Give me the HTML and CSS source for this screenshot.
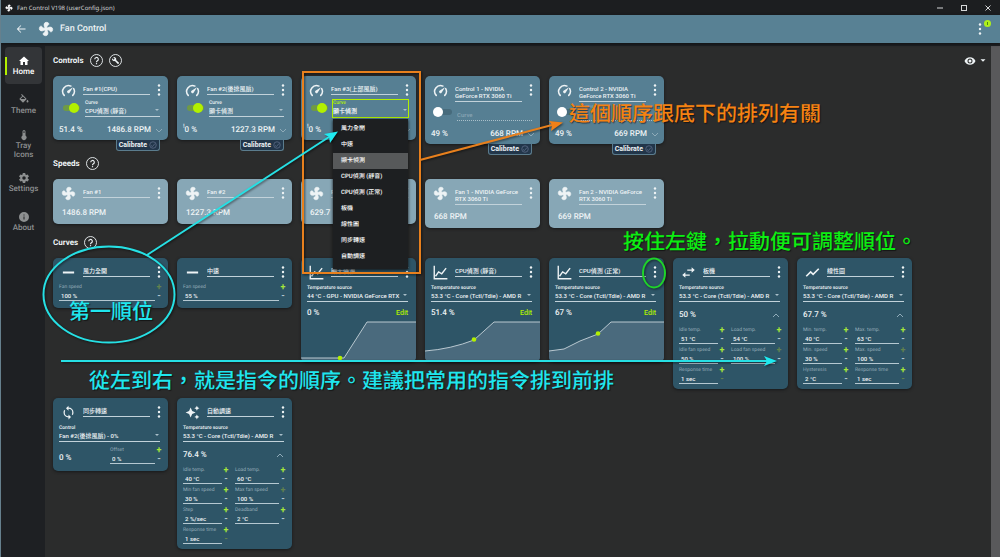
FILE: index.html
```html
<!DOCTYPE html>
<html lang="zh-TW">
<head>
<meta charset="utf-8">
<title>Fan Control</title>
<link rel="stylesheet" href="styles.css">
</head>
<body>
<svg class="defs" aria-hidden="true">
  <symbol id="fan" viewBox="0 0 24 24"><path stroke="currentColor" stroke-width="1" d="M12.5,2C17,2 17.11,5.57 14.75,6.75C13.76,7.24 13.32,8.29 13.13,9.22C13.61,9.42 14.03,9.73 14.35,10.13C18.05,8.13 22.03,8.92 22.03,12.5C22.03,17 18.46,17.1 17.28,14.73C16.78,13.74 15.72,13.3 14.79,13.11C14.59,13.59 14.28,14 13.88,14.34C15.87,18.03 15.08,22 11.5,22C7,22 6.91,18.42 9.27,17.24C10.25,16.75 10.69,15.71 10.89,14.79C10.4,14.59 9.97,14.27 9.65,13.87C5.96,15.85 2,15.07 2,11.5C2,7 5.56,6.89 6.74,9.26C7.24,10.25 8.29,10.68 9.22,10.87C9.41,10.39 9.73,9.97 10.14,9.65C8.15,5.96 8.94,2 12.5,2Z"/></symbol>
  <symbol id="gauge" viewBox="0 0 24 24"><path d="M5.2,19.8A9.4,9.4 0 0 1 16,4.9M20.3,8.9A9.4,9.4 0 0 1 18.8,19.8" fill="none" stroke="currentColor" stroke-width="2.4" stroke-linecap="round"/><path d="M10.4,15.6a2.3,2.3 0 0 0 3.3,0l5.6,-8.8l-8.9,5.5a2.3,2.3 0 0 0 0,3.3z"/></symbol>
  <symbol id="dots" viewBox="0 0 4 14"><circle cx="2" cy="2.5" r="1.2"/><circle cx="2" cy="7" r="1.2"/><circle cx="2" cy="11.5" r="1.2"/></symbol>
  <symbol id="caret" viewBox="0 0 6 4"><path d="M1,1H5L3,3Z"/></symbol>
  <symbol id="down" viewBox="0 0 8 5"><path d="M1,1L4,4L7,1" fill="none" stroke="currentColor"/></symbol>
  <symbol id="up" viewBox="0 0 8 5"><path d="M1,4L4,1L7,4" fill="none" stroke="currentColor"/></symbol>
  <symbol id="line" viewBox="0 0 24 24"><path d="M3,12H21" stroke="currentColor" stroke-width="3"/></symbol>
  <symbol id="chart" viewBox="0 0 24 24"><path d="M2,1V22H23M4,18L9,11L14,14L21,5" fill="none" stroke="currentColor" stroke-width="2.2"/></symbol>
  <symbol id="swap" viewBox="0 0 24 24"><path d="M22,8L17,3.5V7H10V9H17V12.500ZM2,16L7,11.500V15H14V17H7V20.500Z"/></symbol>
  <symbol id="trend" viewBox="0 0 24 24"><path d="M2,18L9,11L13,15L22,6" fill="none" stroke="currentColor" stroke-width="2.6"/></symbol>
  <symbol id="sync" viewBox="0 0 24 24"><path d="M12,18A6,6 0 0,1 6,12C6,11 6.25,10.03 6.7,9.2L5.24,7.74C4.46,8.97 4,10.43 4,12A8,8 0 0,0 12,20V23L16,19L12,15M12,4V1L8,5L12,9V6A6,6 0 0,1 18,12C18,13 17.75,13.97 17.3,14.8L18.76,16.26C19.54,15.03 20,13.57 20,12A8,8 0 0,0 12,4Z"/></symbol>
  <symbol id="auto" viewBox="0 0 24 24"><path d="M19 9l1.25-2.75L23 5l-2.75-1.25L19 1l-1.25 2.75L15 5l2.75 1.25L19 9zM11.500 9.500L9 4 6.500 9.500 1 12l5.500 2.500L9 20l2.500-5.500L17 12zM19 15l-1.250 2.750L15 19l2.750 1.250L19 23l1.250-2.750L23 19l-2.750-1.250z"/></symbol>
  <symbol id="help" viewBox="0 0 26 26"><circle cx="13" cy="13" r="12" fill="none" stroke="currentColor" stroke-width="1.8"/><path d="M9.500,10.500a3.600,3.600 0 1 1 5.400,3.100q-1.900,1.100 -1.900,3" fill="none" stroke="currentColor" stroke-width="2.200"/><circle cx="13" cy="19.300" r="1.400"/></symbol>
  <symbol id="wrench" viewBox="0 0 26 26"><circle cx="13" cy="13" r="12" fill="none" stroke="currentColor" stroke-width="1.8"/><path transform="translate(5.500 5.500) scale(.64)" d="M22.7,19L13.6,9.9C14.5,7.6 14,4.9 12.1,3C10.1,1 7.1,0.6 4.7,1.7L9,6L6,9L1.6,4.7C0.4,7.1 0.9,10.1 2.9,12.1C4.8,14 7.5,14.5 9.8,13.6L18.9,22.7C19.3,23.1 19.9,23.1 20.3,22.7L22.6,20.4C23.1,20 23.1,19.3 22.7,19Z"/></symbol>
  <symbol id="cal" viewBox="0 0 16 16"><circle cx="8" cy="8" r="6.500" fill="none" stroke="currentColor" stroke-width="1.600"/><path d="M4,9L7,11L12,5" fill="none" stroke="currentColor" stroke-width="1.600"/></symbol>
</svg>

<div class="titlebar">
  <svg class="i8"><use href="#fan"/></svg>
  <span class="grow">Fan Control V198 (userConfig.json)</span>
  <button aria-label="Minimize"><svg viewBox="0 0 8 8"><path d="M1,4H7" stroke="currentColor"/></svg></button>
  <button aria-label="Maximize"><svg viewBox="0 0 8 8"><rect x="1.500" y="1.500" width="5" height="5" fill="none" stroke="currentColor"/></svg></button>
  <button aria-label="Close"><svg viewBox="0 0 8 8"><path d="M1.500,1.500L6.500,6.500M6.500,1.500L1.500,6.500" stroke="currentColor"/></svg></button>
</div>

<header class="appbar">
  <button aria-label="Back"><svg class="i12" viewBox="0 0 24 24"><path d="M21,11V13H7L12.500,18.500L11.300,19.700L3.600,12L11.300,4.300L12.500,5.500L7,11H21Z"/></svg></button>
  <svg class="i16"><use href="#fan"/></svg>
  <h1 class="grow">Fan Control</h1>
  <button class="more" aria-label="More"><svg class="dots"><use href="#dots"/></svg><span class="badge"></span></button>
</header>

<div class="shell">
  <nav class="side">
    <a class="on" href="#home"><svg class="i12" viewBox="0 0 24 24"><path d="M10,20V14H14V20H19V12H22L12,3L2,12H5V20H10Z"/></svg>Home</a>
    <a href="#theme"><svg class="i12" viewBox="0 0 24 24"><path d="M19,11.5C19,11.5 17,13.67 17,15A2,2 0 0,0 19,17A2,2 0 0,0 21,15C21,13.67 19,11.5 19,11.5M5.21,10L10,5.21L14.79,10M16.56,8.94L7.62,0L6.21,1.41L8.59,3.79L3.44,8.94C2.85,9.5 2.85,10.47 3.44,11.06L8.94,16.56C9.23,16.85 9.62,17 10,17C10.38,17 10.77,16.85 11.06,16.56L16.56,11.06C17.15,10.47 17.15,9.5 16.56,8.94Z"/></svg>Theme</a>
    <a href="#tray"><svg class="i12" viewBox="0 0 24 24"><path d="M15 13V5A3 3 0 0 0 9 5V13A5 5 0 1 0 15 13M12 4A1 1 0 0 1 13 5V8H11V5A1 1 0 0 1 12 4Z"/></svg>Tray<br>Icons</a>
    <a href="#settings"><svg class="i12" viewBox="0 0 24 24"><path d="M12,15.5A3.5,3.5 0 0,1 8.5,12A3.5,3.5 0 0,1 12,8.5A3.5,3.5 0 0,1 15.5,12A3.5,3.5 0 0,1 12,15.5M19.43,12.97C19.47,12.65 19.5,12.33 19.5,12C19.5,11.67 19.47,11.34 19.43,11L21.54,9.37C21.73,9.22 21.78,8.95 21.66,8.73L19.66,5.27C19.54,5.05 19.27,4.96 19.05,5.05L16.56,6.05C16.04,5.66 15.5,5.32 14.87,5.07L14.5,2.42C14.46,2.18 14.25,2 14,2H10C9.75,2 9.54,2.18 9.5,2.42L9.13,5.07C8.5,5.32 7.96,5.66 7.44,6.05L4.95,5.05C4.73,4.96 4.46,5.05 4.34,5.27L2.34,8.73C2.21,8.95 2.27,9.22 2.46,9.37L4.57,11C4.53,11.34 4.5,11.67 4.5,12C4.5,12.33 4.53,12.65 4.57,12.97L2.46,14.63C2.27,14.78 2.21,15.05 2.34,15.27L4.34,18.73C4.46,18.95 4.73,19.03 4.95,18.95L7.44,17.94C7.96,18.34 8.5,18.68 9.13,18.93L9.5,21.58C9.54,21.82 9.75,22 10,22H14C14.25,22 14.46,21.82 14.5,21.58L14.87,18.93C15.5,18.67 16.04,18.34 16.56,17.94L19.05,18.95C19.27,19.03 19.54,18.95 19.66,18.73L21.66,15.27C21.78,15.05 21.73,14.78 21.54,14.63L19.43,12.97Z"/></svg>Settings</a>
    <a href="#about"><svg class="i12" viewBox="0 0 24 24"><path d="M13,9H11V7H13M13,17H11V11H13M12,2A10,10 0 0,0 2,12A10,10 0 0,0 12,22A10,10 0 0,0 22,12A10,10 0 0,0 12,2Z"/></svg>About</a>
  </nav>

  <main class="main">
    <section>
      <div class="heading"><h2>Controls</h2>
        <button aria-label="Help"><svg class="i13"><use href="#help"/></svg></button>
        <button aria-label="Setup"><svg class="i13"><use href="#wrench"/></svg></button>
        <button class="view" aria-label="Visibility"><svg class="i12" viewBox="0 0 24 24"><path d="M12,9A3,3 0 0,0 9,12A3,3 0 0,0 12,15A3,3 0 0,0 15,12A3,3 0 0,0 12,9M12,17A5,5 0 0,1 7,12A5,5 0 0,1 12,7A5,5 0 0,1 17,12A5,5 0 0,1 12,17M12,4.5C7,4.5 2.73,7.61 1,12C2.73,16.39 7,19.5 12,19.5C17,19.5 21.27,16.39 23,12C21.27,7.61 17,4.5 12,4.5Z"/></svg><svg class="caret"><use href="#caret"/></svg></button>
      </div>
      <div class="cards">
        <div class="slot">
          <article class="card control">
            <div class="head"><svg class="i14"><use href="#gauge"/></svg><input class="name" aria-label="Name" value="Fan #1(CPU)"><button aria-label="Menu"><svg class="dots"><use href="#dots"/></svg></button></div>
            <div class="drive"><input class="switch" type="checkbox" aria-label="Enabled" checked><label class="pick">Curve<select><option>CPU偵測 (靜音)</option></select><svg class="caret"><use href="#caret"/></svg></label></div>
            <div class="foot"><span>51.4 %</span><span>1486.8 RPM</span><svg class="chev"><use href="#down"/></svg></div>
          </article>
          <button class="calibrate">Calibrate<svg class="i8"><use href="#cal"/></svg></button>
        </div>
        <div class="slot">
          <article class="card control">
            <div class="head"><svg class="i14"><use href="#gauge"/></svg><input class="name" aria-label="Name" value="Fan #2(後排風扇)"><button aria-label="Menu"><svg class="dots"><use href="#dots"/></svg></button></div>
            <div class="drive"><input class="switch" type="checkbox" aria-label="Enabled" checked><label class="pick">Curve<select><option>顯卡偵測</option></select><svg class="caret"><use href="#caret"/></svg></label></div>
            <div class="foot"><span><sup>!</sup>0 %</span><span>1227.3 RPM</span><svg class="chev"><use href="#down"/></svg></div>
          </article>
          <button class="calibrate">Calibrate<svg class="i8"><use href="#cal"/></svg></button>
        </div>
        <div class="slot">
          <article class="card control">
            <div class="head"><svg class="i14"><use href="#gauge"/></svg><input class="name" aria-label="Name" value="Fan #3(上部風扇)"><button aria-label="Menu"><svg class="dots"><use href="#dots"/></svg></button></div>
            <div class="drive"><input class="switch" type="checkbox" aria-label="Enabled" checked>
              <div class="open">
                <label class="pick">Curve<select><option>顯卡偵測</option></select><svg class="caret"><use href="#caret"/></svg></label>
                <ul class="menu" role="listbox" aria-label="Curve">
                  <li role="option">風力全開</li><li role="option">中速</li><li role="option" aria-selected="true">顯卡偵測</li><li role="option">CPU偵測 (靜音)</li><li role="option">CPU偵測 (正常)</li><li role="option">板機</li><li role="option">線性圖</li><li role="option">同步轉速</li><li role="option">自動調速</li>
                </ul>
              </div>
            </div>
            <div class="foot"><span><sup>!</sup>0 %</span><svg class="chev"><use href="#down"/></svg></div>
          </article>
        </div>
        <div class="slot">
          <article class="card control">
            <div class="head"><svg class="i14"><use href="#gauge"/></svg><textarea class="name" aria-label="Name" rows="2">Control 1 - NVIDIA
GeForce RTX 3060 Ti</textarea><button aria-label="Menu"><svg class="dots"><use href="#dots"/></svg></button></div>
            <div class="drive"><input class="switch" type="checkbox" aria-label="Enabled"><div class="pick empty"><select aria-label="Curve"><option>Curve</option></select></div></div>
            <div class="foot"><span>49 %</span><span>668 RPM</span><svg class="chev"><use href="#down"/></svg></div>
          </article>
          <button class="calibrate">Calibrate<svg class="i8"><use href="#cal"/></svg></button>
        </div>
        <div class="slot">
          <article class="card control">
            <div class="head"><svg class="i14"><use href="#gauge"/></svg><textarea class="name" aria-label="Name" rows="2">Control 2 - NVIDIA
GeForce RTX 3060 Ti</textarea><button aria-label="Menu"><svg class="dots"><use href="#dots"/></svg></button></div>
            <div class="drive"><input class="switch" type="checkbox" aria-label="Enabled"><label class="pick empty">Curve<select><option></option></select></label></div>
            <div class="foot"><span>49 %</span><span>669 RPM</span><svg class="chev"><use href="#down"/></svg></div>
          </article>
          <button class="calibrate">Calibrate<svg class="i8"><use href="#cal"/></svg></button>
        </div>
      </div>
    </section>

    <section>
      <div class="heading"><h2>Speeds</h2><button aria-label="Help"><svg class="i13"><use href="#help"/></svg></button></div>
      <div class="cards">
        <article class="card speed"><div class="head"><svg class="i14"><use href="#fan"/></svg><input class="name" aria-label="Name" value="Fan #1"><button aria-label="Menu"><svg class="dots"><use href="#dots"/></svg></button></div><p>1486.8 RPM</p></article>
        <article class="card speed"><div class="head"><svg class="i14"><use href="#fan"/></svg><input class="name" aria-label="Name" value="Fan #2"><button aria-label="Menu"><svg class="dots"><use href="#dots"/></svg></button></div><p>1227.3 RPM</p></article>
        <article class="card speed"><div class="head"><svg class="i14"><use href="#fan"/></svg><input class="name" aria-label="Name" value="Fan #3"><button aria-label="Menu"><svg class="dots"><use href="#dots"/></svg></button></div><p>629.7</p></article>
        <article class="card speed"><div class="head"><svg class="i14"><use href="#fan"/></svg><textarea class="name" aria-label="Name" rows="2">Fan 1 - NVIDIA GeForce
RTX 3060 Ti</textarea><button aria-label="Menu"><svg class="dots"><use href="#dots"/></svg></button></div><p>668 RPM</p></article>
        <article class="card speed"><div class="head"><svg class="i14"><use href="#fan"/></svg><textarea class="name" aria-label="Name" rows="2">Fan 2 - NVIDIA GeForce
RTX 3060 Ti</textarea><button aria-label="Menu"><svg class="dots"><use href="#dots"/></svg></button></div><p>669 RPM</p></article>
      </div>
    </section>

    <section>
      <div class="heading"><h2>Curves</h2><button aria-label="Help"><svg class="i13"><use href="#help"/></svg></button></div>
      <div class="cards">
        <article class="card curve">
          <div class="head"><svg class="i14"><use href="#line"/></svg><input class="name" aria-label="Name" value="風力全開"><button aria-label="Menu"><svg class="dots"><use href="#dots"/></svg></button></div>
          <div class="num"><label for="n1">Fan speed</label><button class="off">+</button><input id="n1" value="100 %"><button>-</button></div>
        </article>
        <article class="card curve">
          <div class="head"><svg class="i14"><use href="#line"/></svg><input class="name" aria-label="Name" value="中速"><button aria-label="Menu"><svg class="dots"><use href="#dots"/></svg></button></div>
          <div class="num"><label for="n2">Fan speed</label><button>+</button><input id="n2" value="55 %"><button>-</button></div>
        </article>
        <article class="card curve">
          <div class="head"><svg class="i14"><use href="#chart"/></svg><input class="name" aria-label="Name" value="顯卡偵測"><button aria-label="Menu"><svg class="dots"><use href="#dots"/></svg></button></div>
          <label class="pick">Temperature source<select><option>44 °C - GPU - NVIDIA GeForce RTX 3060 Ti</option></select><svg class="caret"><use href="#caret"/></svg></label>
          <div class="state"><span>0 %</span><button class="edit">Edit</button></div>
          <svg class="plot" viewBox="0 0 115 41" preserveAspectRatio="none"><path class="area" d="M0,37H43L66,1H115V41H0Z"/><path class="stroke" d="M0,37H43L66,1H115"/><circle cx="39" cy="37" r="2.300"/></svg>
        </article>
        <article class="card curve">
          <div class="head"><svg class="i14"><use href="#chart"/></svg><input class="name" aria-label="Name" value="CPU偵測 (靜音)"><button aria-label="Menu"><svg class="dots"><use href="#dots"/></svg></button></div>
          <label class="pick">Temperature source<select><option>53.3 °C - Core (Tctl/Tdie) - AMD R</option></select><svg class="caret"><use href="#caret"/></svg></label>
          <div class="state"><span>51.4 %</span><button class="edit">Edit</button></div>
          <svg class="plot" viewBox="0 0 115 41" preserveAspectRatio="none"><path class="area" d="M0,30Q26,28 49,19L69,1H115V41H0Z"/><path class="stroke" d="M0,30Q26,28 49,19L69,1H115"/><circle cx="49" cy="18.500" r="2.300"/></svg>
        </article>
        <article class="card curve">
          <div class="head"><svg class="i14"><use href="#chart"/></svg><input class="name" aria-label="Name" value="CPU偵測 (正常)"><button aria-label="Menu"><svg class="dots"><use href="#dots"/></svg></button></div>
          <label class="pick">Temperature source<select><option>53.3 °C - Core (Tctl/Tdie) - AMD R</option></select><svg class="caret"><use href="#caret"/></svg></label>
          <div class="state"><span>67 %</span><button class="edit">Edit</button></div>
          <svg class="plot" viewBox="0 0 115 41" preserveAspectRatio="none"><path class="area" d="M0,30L15,28L31,20L49,13L62,1H115V41H0Z"/><path class="stroke" d="M0,30L15,28L31,20L49,13L62,1H115"/><circle cx="49" cy="12.500" r="2.300"/></svg>
        </article>
        <article class="card curve">
          <div class="head"><svg class="i14"><use href="#swap"/></svg><input class="name" aria-label="Name" value="板機"><button aria-label="Menu"><svg class="dots"><use href="#dots"/></svg></button></div>
          <label class="pick">Temperature source<select><option>53.3 °C - Core (Tctl/Tdie) - AMD R</option></select><svg class="caret"><use href="#caret"/></svg></label>
          <div class="state tall"><span>50 %</span><svg class="chev"><use href="#up"/></svg></div>
          <div class="fields">
            <div class="num"><label for="a1">Idle temp.</label><button>+</button><input id="a1" value="51 °C"><button>-</button></div>
            <div class="num"><label for="a2">Load temp.</label><button>+</button><input id="a2" value="54 °C"><button>-</button></div>
            <div class="num"><label for="a3">Idle fan speed</label><button>+</button><input id="a3" value="50 %"><button>-</button></div>
            <div class="num"><label for="a4">Load fan speed</label><button class="off">+</button><input id="a4" value="100 %"><button>-</button></div>
            <div class="num"><label for="a5">Response time</label><button>+</button><input id="a5" value="1 sec"><button class="off">-</button></div>
          </div>
        </article>
        <article class="card curve">
          <div class="head"><svg class="i14"><use href="#trend"/></svg><input class="name" aria-label="Name" value="線性圖"><button aria-label="Menu"><svg class="dots"><use href="#dots"/></svg></button></div>
          <label class="pick">Temperature source<select><option>53.3 °C - Core (Tctl/Tdie) - AMD R</option></select><svg class="caret"><use href="#caret"/></svg></label>
          <div class="state tall"><span>67.7 %</span><svg class="chev"><use href="#up"/></svg></div>
          <div class="fields">
            <div class="num"><label for="b1">Min. temp.</label><button>+</button><input id="b1" value="40 °C"><button>-</button></div>
            <div class="num"><label for="b2">Max. temp.</label><button>+</button><input id="b2" value="63 °C"><button>-</button></div>
            <div class="num"><label for="b3">Min. speed</label><button>+</button><input id="b3" value="30 %"><button>-</button></div>
            <div class="num"><label for="b4">Max. speed</label><button class="off">+</button><input id="b4" value="100 %"><button>-</button></div>
            <div class="num"><label for="b5">Hysteresis</label><button>+</button><input id="b5" value="2 °C"><button>-</button></div>
            <div class="num"><label for="b6">Response time</label><button>+</button><input id="b6" value="1 sec"><button class="off">-</button></div>
          </div>
        </article>
        <article class="card curve">
          <div class="head"><svg class="i14"><use href="#sync"/></svg><input class="name" aria-label="Name" value="同步轉速"><button aria-label="Menu"><svg class="dots"><use href="#dots"/></svg></button></div>
          <label class="pick">Control<select><option>Fan #2(後排風扇) - 0%</option></select><svg class="caret"><use href="#caret"/></svg></label>
          <div class="offset"><span>0 %</span><div class="num"><label for="s1">Offset</label><button>+</button><input id="s1" value="0 %"><button>-</button></div></div>
        </article>
        <article class="card curve">
          <div class="head"><svg class="i14"><use href="#auto"/></svg><input class="name" aria-label="Name" value="自動調速"><button aria-label="Menu"><svg class="dots"><use href="#dots"/></svg></button></div>
          <label class="pick">Temperature source<select><option>53.3 °C - Core (Tctl/Tdie) - AMD R</option></select><svg class="caret"><use href="#caret"/></svg></label>
          <div class="state tall"><span>76.4 %</span><svg class="chev"><use href="#up"/></svg></div>
          <div class="fields">
            <div class="num"><label for="c1">Idle temp.</label><button>+</button><input id="c1" value="40 °C"><button>-</button></div>
            <div class="num"><label for="c2">Load temp.</label><button>+</button><input id="c2" value="60 °C"><button>-</button></div>
            <div class="num"><label for="c3">Min fan speed</label><button>+</button><input id="c3" value="30 %"><button>-</button></div>
            <div class="num"><label for="c4">Max fan speed</label><button class="off">+</button><input id="c4" value="100 %"><button>-</button></div>
            <div class="num"><label for="c5">Step</label><button>+</button><input id="c5" value="2 %/sec"><button>-</button></div>
            <div class="num"><label for="c6">Deadband</label><button>+</button><input id="c6" value="2 °C"><button>-</button></div>
            <div class="num"><label for="c7">Response time</label><button>+</button><input id="c7" value="1 sec"><button class="off">-</button></div>
          </div>
        </article>
      </div>
    </section>
  </main>
  <div class="scroll"></div>
</div>

<div class="notes">
  <svg viewBox="0 0 1000 557">
    <g class="orange"><rect x="303" y="72" width="117" height="201"/><path d="M420,160L552,125"/><path class="tip" d="M563,122.500L549,121L552,125L551,131Z"/></g>
    <g class="cyan"><ellipse cx="109" cy="294.500" rx="65.500" ry="48"/><path d="M147,255L329,137"/><path class="tip" d="M338,131.500L330,143L329,137L324,134Z"/><path d="M61,361H767"/><path class="tip" d="M777,361L764,356L767,361L764,366Z"/></g>
    <g class="green"><ellipse cx="654" cy="273" rx="11" ry="14.500"/></g>
  </svg>
  <p class="n1">這個順序跟底下的排列有關</p>
  <p class="n2">按住左鍵，拉動便可調整順位。</p>
  <p class="n3">第一順位</p>
  <p class="n4">從左到右，就是指令的順序。建議把常用的指令排到前排</p>
</div>
</body>
</html>
```

FILE: styles.css
```css
* { box-sizing: border-box; margin: 0; padding: 0; }
html { background: #2b2c2c; }
body {
  position: relative;
  min-height: 100vh;
  display: flex;
  flex-direction: column;
  border-left: 1px solid #66808d;
  color: #eef3f5;
  font: 500 6px/7px Roboto, "Noto Sans CJK TC", sans-serif;
  text-rendering: geometricPrecision;
  overflow: hidden;
}
button, input, select, textarea {
  font: inherit;
  color: inherit;
  background: none;
  border: 0;
  border-radius: 0;
  outline: 0;
  appearance: none;
}
button { display: flex; align-items: center; justify-content: center; cursor: pointer; }
svg { display: block; flex: none; fill: currentColor; }
.defs { position: absolute; width: 0; height: 0; }
.grow { flex: 1; }
.i8 { width: 8px; height: 8px; }
.i12 { width: 12px; height: 12px; }
.i13 { width: 13px; height: 13px; }
.i14 { width: 15px; height: 15px; }
.i16 { width: 16px; height: 16px; }
.dots { width: 4px; height: 14px; }
.caret { width: 6px; height: 4px; }
.chev { width: 8px; height: 5px; color: #8fabb9; }

.titlebar {
  display: flex;
  align-items: center;
  gap: 4px;
  height: 15px;
  padding: 0 2px 0 4px;
  background: #1c1e20;
  color: #d4d6d7;
  font: 6px/14px "Noto Sans", "Open Sans", sans-serif;
}
.titlebar button { width: 20px; height: 14px; }
.titlebar button svg { width: 8px; height: 8px; }
.titlebar .i8 { color: #fff; }

.appbar {
  display: flex;
  align-items: center;
  height: 28px;
  padding: 0 18px 0 14px;
  background: #588194;
  box-shadow: 0 1px 3px #101214;
  z-index: 1;
}
.appbar > .i16 { margin: 0 6px 0 11px; }
.appbar h1 { font-size: 9px; line-height: 14px; font-weight: 500; }
.more { position: relative; }
.badge { position: absolute; left: 6px; top: -2px; width: 7px; height: 7px; border-radius: 50%; background: #aef01a; }
.badge::after { content: ""; position: absolute; left: 3px; top: 2px; width: 1px; height: 3px; background: #4f8a12; }

.shell { flex: 1; display: flex; padding-top: 3px; background: #1e2023; }
.side {
  width: 44px;
  flex: none;
  display: flex;
  flex-direction: column;
  gap: 2px;
  padding: 1px 3px 0 4px;
}
.side a {
  height: 37px;
  display: flex;
  flex-direction: column;
  align-items: center;
  justify-content: center;
  border-radius: 4px;
  color: #8d8f90;
  font-size: 8px;
  line-height: 9px;
  font-weight: 500;
  text-align: center;
  text-decoration: none;
}
.side .on {
  color: #fff;
  background: linear-gradient(#b2f000, #b2f000) 0 50% / 2px 18px no-repeat #333538;
}
.main { flex: 1; padding: 8px 4px 6px 8px; background: #2b2c2c; }
.scroll { width: 9px; flex: none; background: #59595b; }
section { margin-bottom: 8px; }
.heading { display: flex; align-items: center; gap: 6px; height: 13px; margin-bottom: 9px; }
.heading h2 { font-size: 8px; line-height: 13px; font-weight: 700; }
.view { margin-left: auto; gap: 3px; }
.view .caret { width: 8px; height: 5px; }

.cards { display: grid; grid-template-columns: repeat(auto-fill, 115px); gap: 9px; align-items: start; }
.card { border-radius: 5px; background: #567f93; box-shadow: 0 1px 3px #17191b; }
.slot { display: flex; flex-direction: column; }
.speed { background: #87a7b6; }
.curve { background: #2e5567; padding-bottom: 5px; overflow: hidden; }
.head { display: flex; align-items: flex-start; gap: 7px; min-height: 21px; padding: 7px 7px 0 8px; }
.name {
  display: block;
  flex: 1;
  min-width: 0;
  margin-top: 2px;
  height: 10px;
  padding-bottom: 2px;
  border-bottom: 1px solid #c2d2da;
  line-height: 7px;
  white-space: pre;
  overflow: hidden;
  resize: none;
}
textarea.name { height: 17px; }
.drive { display: flex; align-items: center; padding: 1px 8px 0 10px; gap: 5px; height: 19px; }
.switch {
  position: relative;
  width: 17px;
  height: 6px;
  border-radius: 3px;
  background: #476b7c;
}
.switch::before {
  content: "";
  position: absolute;
  left: -2px;
  top: -2px;
  width: 10px;
  height: 10px;
  border-radius: 50%;
  background: #fff;
}
.switch:checked { background: #6f9a45; }
.switch:checked::before { left: 6px; background: #b2f000; }
.pick { position: relative; display: block; flex: 1; min-width: 0; height: 17px; font-size: 5px; line-height: 6px; }
.pick select {
  display: block;
  width: 100%;
  height: 11px;
  padding: 0 8px 0 0;
  border-bottom: 1px solid #c2d2da;
  font-size: 6px;
  line-height: 10px;
}
.pick .caret { position: absolute; right: 0; bottom: 5px; color: #a9bfca; }
.pick option { color: #111; }
.empty { color: #89a5b3; }
.empty select { border-bottom: 1px dotted #a9bfca; }
div.empty { padding-top: 6px; }
.open { position: relative; flex: 1; min-width: 0; }
.open .pick { color: #b2f000; outline: 1px solid #b2f000; }
.open select { color: #fff; border: 0; }
.menu {
  position: absolute;
  z-index: 2;
  left: 0;
  right: 0;
  top: 19px;
  padding: 2px 0 4px;
  background: #1d1f21;
  box-shadow: 0 1px 3px #111;
  list-style: none;
}
.menu li { padding: 0 8px; line-height: 16px; color: #fff; }
.menu li[aria-selected] { background: #57595a; }
.foot { display: flex; align-items: center; gap: 4px; height: 23px; padding: 3px 5px 0 6px; font-size: 8px; line-height: 12px; }
.foot span:first-child { flex: 1; }
.foot sup { font-size: 6px; line-height: 6px; }
.calibrate {
  align-self: flex-end;
  gap: 2px;
  height: 11px;
  margin: 0 8px -6px 0;
  padding: 0 2px;
  border: 1px solid #5b7c8d;
  border-top: 0;
  border-radius: 0 0 3px 3px;
  background: #22364a;
  font-size: 7px;
  line-height: 9px;
  font-weight: 700;
}
.calibrate svg { color: #5d6b86; }
.speed p { padding: 6px 9px 5px; font-size: 8px; line-height: 12px; }

.curve > .pick { margin: 5px 8px 0 6px; }
.num { display: grid; grid-template-columns: 1fr 7px; height: 17px; min-width: 0; }
.num label { font-size: 5px; line-height: 6px; font-weight: 400; color: #93abb8; white-space: nowrap; }
.num input { width: 100%; min-width: 0; height: 11px; padding-left: 2px; border-bottom: 1px solid #b5c8d1; }
.num button { height: 6px; padding-left: 1px; color: #a5e63a; font-size: 9px; font-weight: 700; line-height: 6px; }
.num button:last-child { height: 10px; color: #b4c6cf; }
.num .off, .num .off:last-child { color: #62824e; }
.curve > .num { margin: 4px 6px 2px 6px; }
.state { display: flex; align-items: center; justify-content: space-between; height: 19px; padding: 3px 8px 0 6px; font-size: 8px; line-height: 12px; }
.tall { height: 25px; padding-top: 1px; }
.edit { color: #b2f000; font-size: 7px; }
.plot { width: 100%; height: 41px; margin-bottom: -5px; }
.plot .area { fill: #4a6a7d; }
.plot .stroke { fill: none; stroke: #b9c8d0; }
.plot circle { fill: #b2f000; }
.fields { display: grid; grid-template-columns: 46px 51px; gap: 3px 6px; padding: 0 6px; }
.offset { display: grid; grid-template-columns: 51px 1fr; align-items: end; padding: 5px 6px 2px; }
.offset > span { font-size: 8px; line-height: 12px; }

.notes { position: absolute; left: -1px; top: 0; width: 1000px; height: 557px; z-index: 5; pointer-events: none; }
.notes svg { width: 1000px; height: 557px; filter: drop-shadow(1px 1px 1px #0008); }
.notes g { fill: none; stroke-width: 2; }
.orange { stroke: #e8801d; }
.cyan { stroke: #26e0e4; }
.green { stroke: #1fd32a; }
.orange .tip { fill: #f08018; stroke: none; }
.cyan .tip { fill: #1feaf0; stroke: none; }
.notes p { position: absolute; font-size: 21px; line-height: 28px; font-weight: 500; white-space: nowrap; text-shadow: 1px 1px 1px #0008; }
.n1 { left: 569px; top: 101px; color: #f58212; }
.n2 { left: 623px; top: 229px; color: #0cee12; }
.n3 { left: 69px; top: 299px; color: #1fe6ee; }
.n4 { left: 89px; top: 368px; color: #1fe6ee; }
```
